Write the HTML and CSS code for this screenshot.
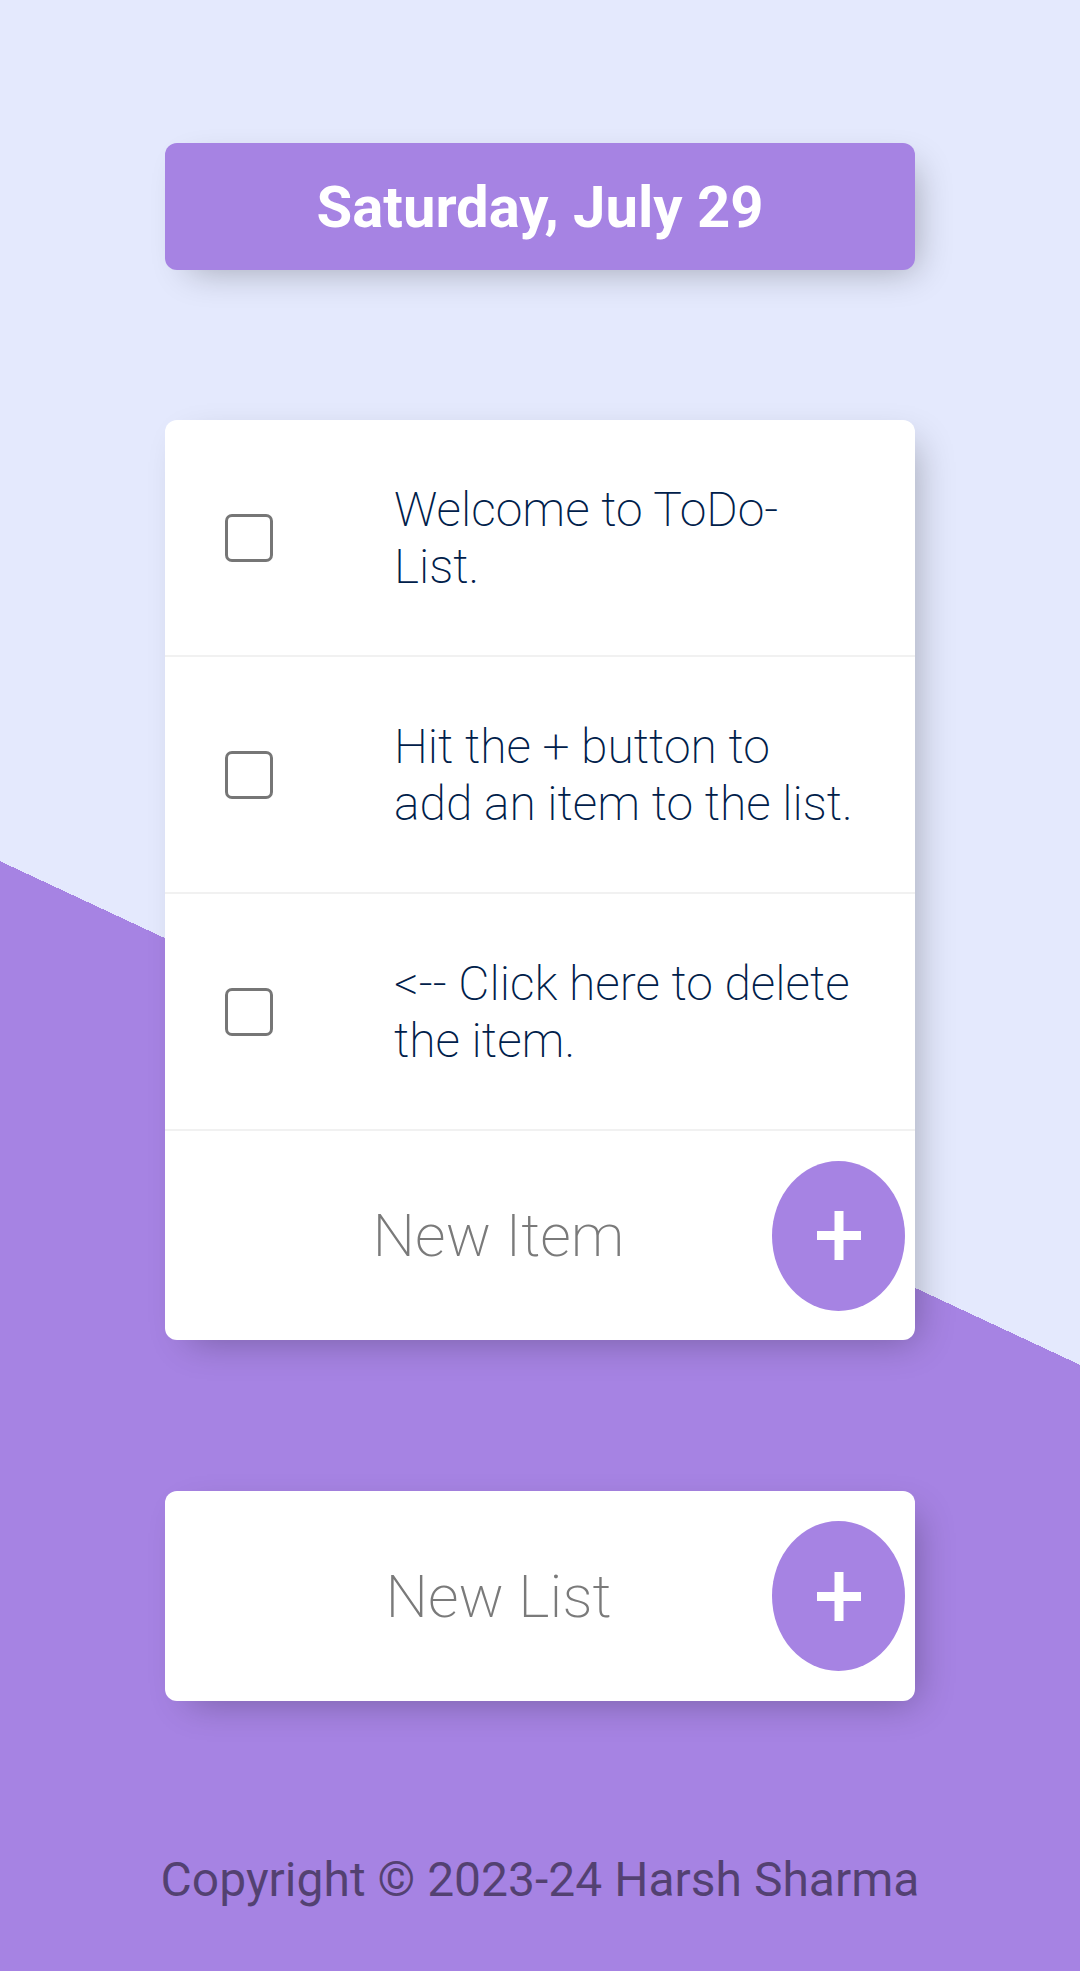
FILE: index.html
```html
<!DOCTYPE html>
<html lang="en">
<head>
<meta charset="utf-8">
<title>ToDo List</title>
<link rel="stylesheet" href="styles.css">
</head>
<body>
<div class="page">
  <div class="heading">
    <h1>Saturday, July 29</h1>
  </div>

  <div class="box">
    <div class="item">
      <span class="check"></span>
      <p>Welcome to ToDo-List.</p>
    </div>
    <div class="item">
      <span class="check"></span>
      <p>Hit the + button to add an item to the list.</p>
    </div>
    <div class="item">
      <span class="check"></span>
      <p>&lt;-- Click here to delete the item.</p>
    </div>
    <div class="new-row">
      <span class="new-label">New Item</span>
      <span class="add-btn">
        <svg width="44" height="49" viewBox="0 0 44 49"><rect x="17.5" y="0" width="9" height="49" fill="#fff"/><rect x="0" y="20" width="44" height="9" fill="#fff"/></svg>
      </span>
    </div>
  </div>

  <div class="box new-list">
    <div class="new-row">
      <span class="new-label">New List</span>
      <span class="add-btn">
        <svg width="44" height="49" viewBox="0 0 44 49"><rect x="17.5" y="0" width="9" height="49" fill="#fff"/><rect x="0" y="20" width="44" height="9" fill="#fff"/></svg>
      </span>
    </div>
  </div>

  <footer class="footer">Copyright © 2023-24 Harsh Sharma</footer>
</div>
</body>
</html>
```

FILE: styles.css
```css
html, body {
  margin: 0;
  padding: 0;
}

body {
  font-family: Roboto, "Liberation Sans", sans-serif;
  background-color: #A683E3;
}

.page {
  height: 1971px;
  box-sizing: border-box;
  padding-top: 143px;
  overflow: hidden;
  background-color: #A683E3;
  background-image: linear-gradient(25deg, #A683E3 50%, #E4E9FD 50%);
  background-size: 1080px 2226px;
  background-repeat: no-repeat;
}

.heading {
  width: 750px;
  height: 127px;
  margin: 0 auto;
  background: #A683E3;
  border-radius: 12px;
  display: flex;
  align-items: center;
  justify-content: center;
  box-shadow: 12px 12px 36px -12px rgba(0, 0, 0, 0.3);
}

.heading h1 {
  margin: 0;
  color: #fff;
  font-size: 58px;
  font-weight: 700;
  line-height: 1;
}

.box {
  width: 750px;
  margin: 150px auto 0;
  background: #fff;
  border-radius: 12px;
  box-shadow: 12px 12px 36px -12px rgba(0, 0, 0, 0.3);
  overflow: hidden;
}

.item {
  height: 235px;
  display: flex;
  align-items: center;
  padding: 0 60px;
  border-bottom: 2px solid #F1F1F1;
}

.check {
  flex: none;
  width: 42px;
  height: 42px;
  border: 3px solid #767676;
  border-radius: 7px;
  margin-right: 121px;
}

.item p {
  flex: 1;
  margin: 0;
  font-size: 48px;
  font-weight: 200;
  line-height: 57px;
  color: #00204a;
}

.new-row {
  height: 209px;
  display: flex;
  align-items: center;
  padding: 0 10px 0 60px;
}

.new-list {
  margin-top: 151px;
}

.new-list .new-row {
  height: 210px;
}

.new-label {
  flex: 1;
  text-align: center;
  font-size: 60px;
  font-weight: 200;
  color: #7a7a7a;
}

.add-btn {
  flex: none;
  width: 133px;
  height: 150px;
  border-radius: 50%;
  background: #A683E3;
  display: flex;
  align-items: center;
  justify-content: center;
}

.add-btn svg {
  display: block;
}

.footer {
  margin-top: 150px;
  text-align: center;
  font-size: 48px;
  color: rgba(0, 0, 0, 0.5);
}
```
